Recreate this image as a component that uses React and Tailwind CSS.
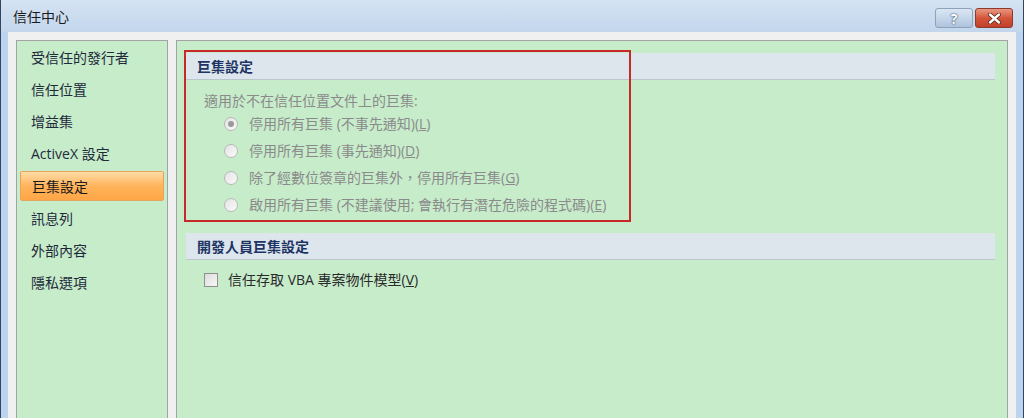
import React from 'react';

const FONT = { fontFamily: '"Open Sans", "Noto Sans CJK TC", sans-serif' };

const navItems = [
  '受信任的發行者',
  '信任位置',
  '增益集',
  'ActiveX 設定',
  '巨集設定',
  '訊息列',
  '外部內容',
  '隱私選項',
];

const radioOptions = [
  { text: '停用所有巨集 (不事先通知)', key: 'L', checked: true },
  { text: '停用所有巨集 (事先通知)', key: 'D' },
  { text: '除了經數位簽章的巨集外，停用所有巨集', key: 'G' },
  { text: '啟用所有巨集 (不建議使用; 會執行有潛在危險的程式碼)', key: 'E' },
];

const SectionHeader = ({ children }) => (
  <div className="ml-[9px] mr-[12px] h-[27px] flex items-center pl-[11px] bg-[#dce6ec] border-b border-[#b9c6cc] text-[14px] font-bold text-[#1d3464]">
    {children}
  </div>
);

const Radio = ({ checked }) => (
  <span className="w-[14px] h-[14px] rounded-full border border-[#b8b8b8] bg-gradient-to-br from-[#e4e4e4] to-[#fafafa] flex items-center justify-center shrink-0">
    {checked && <span className="w-[6px] h-[6px] rounded-full bg-[#9a9a9a]" />}
  </span>
);

const App = () => {
  return (
    <div
      className="w-[1024px] h-[418px] overflow-hidden flex flex-col border-x border-[#34455e] bg-[#bcd4ee]"
      style={FONT}
    >
      {/* title bar */}
      <div className="h-[32px] shrink-0 flex items-center justify-between pl-[12px] pr-[10px] bg-gradient-to-b from-[#d5e3f3] to-[#c2d6ec]">
        <span className="text-[14px] text-[#1b1b1b]">信任中心</span>
        <div className="flex items-center gap-[2px] mt-[4px]">
          <button
            type="button"
            className="w-[38px] h-[20px] rounded-[3px] border border-[#8da2bd] bg-gradient-to-b from-[#dbe6f3] via-[#c5d6ea] to-[#aec3dc] flex items-center justify-center text-[14px] font-bold text-white"
            style={{ textShadow: '0 0 2px #3a4e6a, 0 0 1px #3a4e6a' }}
          >
            ?
          </button>
          <button
            type="button"
            className="w-[38px] h-[20px] rounded-[3px] border border-[#8e3a2a] bg-gradient-to-b from-[#e89880] via-[#d4553b] to-[#c0402a] flex items-center justify-center"
          >
            <svg width="13" height="11" viewBox="0 0 13 11">
              <path
                d="M2 1.5 L11 9.5 M11 1.5 L2 9.5"
                stroke="#5a2016"
                strokeWidth="4"
                strokeLinecap="round"
              />
              <path
                d="M2 1.5 L11 9.5 M11 1.5 L2 9.5"
                stroke="#ffffff"
                strokeWidth="2.4"
                strokeLinecap="round"
              />
            </svg>
          </button>
        </div>
      </div>

      {/* body */}
      <div className="flex-1 mx-[7px] bg-[#f0f0f0] flex gap-[8px] pl-[8px] pr-[8px] pt-[8px] min-h-0">
        {/* left nav */}
        <div className="w-[152px] shrink-0 border border-[#a3a3a3] border-b-0 bg-[#c7ecca] px-[3px]">
          {navItems.map((item, i) =>
            i === 4 ? (
              <div
                key={item}
                className="h-[30px] mt-[2px] mb-[1px] flex items-center pl-[11px] text-[14px] text-[#1b1b1b] rounded-[2px] border border-[#e5a55c] bg-gradient-to-b from-[#ffdda6] via-[#ffb35a] to-[#ffa646]"
              >
                {item}
              </div>
            ) : (
              <div
                key={item}
                className="h-[32px] flex items-center pl-[11px] text-[14px] text-[#1e2a3a]"
              >
                {item}
              </div>
            )
          )}
        </div>

        {/* right panel */}
        <div className="relative flex-1 border border-[#a3a3a3] border-b-0 bg-[#c7ecca] pt-[12px]">
          <SectionHeader>巨集設定</SectionHeader>
          <div className="pl-[27px] pt-[10px] text-[14px] text-[#8a8a8a]">
            <div className="h-[20px] flex items-center">適用於不在信任位置文件上的巨集:</div>
            <div className="pl-[20px]">
              {radioOptions.map((opt) => (
                <div key={opt.key} className="h-[27px] flex items-center gap-[11px]">
                  <Radio checked={opt.checked} />
                  <span>
                    {opt.text}(<span className="underline">{opt.key}</span>)
                  </span>
                </div>
              ))}
            </div>
          </div>

          <div className="mt-[15px]">
            <SectionHeader>開發人員巨集設定</SectionHeader>
          </div>
          <div className="pl-[27px] pt-[9px] flex items-center gap-[10px] text-[14px] text-[#2a2a2a]">
            <span className="w-[14px] h-[14px] border border-[#8e8f8f] bg-gradient-to-br from-[#dcdcdc] to-[#f8f8f8]" />
            <span>
              信任存取 VBA 專案物件模型(<span className="underline">V</span>)
            </span>
          </div>

          {/* annotation box */}
          <div className="absolute left-[7px] top-[9px] w-[447px] h-[172px] border-2 border-[#c8282a] pointer-events-none" />
        </div>
      </div>
    </div>
  );
};

export default App;
